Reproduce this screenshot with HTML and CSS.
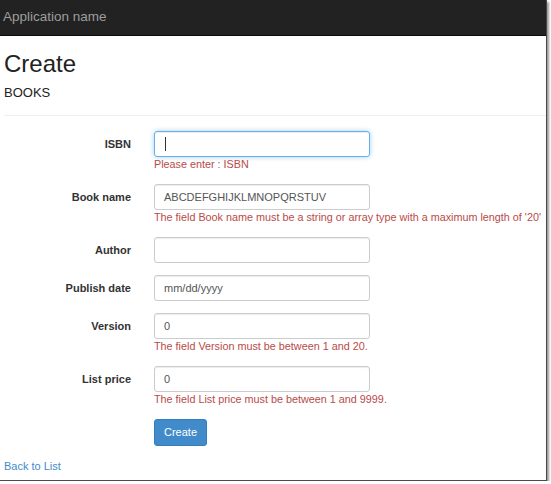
FILE: index.html
```html
<!DOCTYPE html>
<html>
<head>
<meta charset="utf-8">
<link rel="stylesheet" href="styles.css">
</head>
<body>
<div class="frame">
  <div class="navbar"><span class="brand">Application name</span></div>
  <div class="content">
    <h2 class="title">Create</h2>
    <h4 class="subtitle">BOOKS</h4>
    <hr class="rule">
    <form class="form">
      <div class="group">
        <label class="label">ISBN</label>
        <div class="field">
          <div class="input focus"><span class="caret"></span></div>
          <div class="error">Please enter : ISBN</div>
        </div>
      </div>
      <div class="group">
        <label class="label">Book name</label>
        <div class="field">
          <div class="input">ABCDEFGHIJKLMNOPQRSTUV</div>
          <div class="error">The field Book name must be a string or array type with a maximum length of '20'</div>
        </div>
      </div>
      <div class="group">
        <label class="label">Author</label>
        <div class="field"><div class="input"></div></div>
      </div>
      <div class="group">
        <label class="label">Publish date</label>
        <div class="field"><div class="input">mm/dd/yyyy</div></div>
      </div>
      <div class="group">
        <label class="label">Version</label>
        <div class="field">
          <div class="input">0</div>
          <div class="error">The field Version must be between 1 and 20.</div>
        </div>
      </div>
      <div class="group">
        <label class="label">List price</label>
        <div class="field">
          <div class="input">0</div>
          <div class="error">The field List price must be between 1 and 9999.</div>
        </div>
      </div>
      <div class="group">
        <span class="label"></span>
        <div class="field"><span class="btn">Create</span></div>
      </div>
    </form>
    <div class="back"><a class="link" href="#">Back to List</a></div>
  </div>
</div>
</body>
</html>
```
FILE: styles.css
```css
html, body {
  margin: 0;
  padding: 0;
  background: #ffffff;
}
body {
  font-family: "Liberation Sans", Arial, sans-serif;
  font-size: 11px;
  line-height: 16px;
  color: #333333;
}
.frame {
  width: 546px;
  height: 480px;
  overflow: hidden;
  border-right: 1px solid #4a4a4a;
  border-bottom: 1px solid #4a4a4a;
  box-shadow: 2px 2px 2px #9a9a9a;
  background: #ffffff;
}
.navbar {
  height: 36px;
  background: #222222;
  border-bottom: 1px solid #0a0a0a;
  box-sizing: border-box;
  display: flex;
  align-items: center;
  padding-left: 3px;
}
.brand {
  color: #9d9d9d;
  font-size: 13.5px;
  line-height: 16px;
  padding-bottom: 2px;
}
.content {
  padding: 0 0 0 4px;
}
.title {
  margin: 15px 0 0 0;
  font-size: 24px;
  line-height: 26px;
  font-weight: normal;
  color: #222222;
}
.subtitle {
  margin: 8px 0 0 0;
  font-size: 13px;
  line-height: 16px;
  font-weight: normal;
  color: #222222;
}
.rule {
  margin: 14px 0 0 0;
  border: 0;
  border-top: 1px solid #eeeeee;
  height: 0;
}
.form {
  margin-top: 15px;
}
.group {
  display: grid;
  grid-template-columns: 127px 216px;
  column-gap: 23px;
  margin-bottom: 12px;
  align-items: start;
}
.label {
  text-align: right;
  font-weight: bold;
  font-size: 11px;
  line-height: 26px;
  color: #333333;
}
.field {
  min-width: 0;
}
.input {
  box-sizing: border-box;
  width: 216px;
  height: 26px;
  border: 1px solid #cccccc;
  border-radius: 3px;
  padding: 0 9px;
  line-height: 24px;
  font-size: 11px;
  color: #555555;
  box-shadow: inset 0 1px 1px rgba(0,0,0,0.075);
  display: flex;
  align-items: center;
}
.input.focus {
  border-color: #66afe9;
  box-shadow: inset 0 1px 1px rgba(0,0,0,0.075), 0 0 5px rgba(102,175,233,0.6);
}
.caret {
  display: inline-block;
  width: 1px;
  height: 14px;
  background: #333333;
  margin-left: 1px;
}
.error {
  color: #b94a48;
  font-size: 10.8px;
  line-height: 15px;
  white-space: nowrap;
}
.btn {
  display: inline-block;
  box-sizing: border-box;
  width: 53px;
  height: 27px;
  line-height: 25px;
  text-align: center;
  color: #ffffff;
  background: #428bca;
  border: 1px solid #357ebd;
  border-radius: 3px;
  font-size: 11px;
  vertical-align: top;
}
.back {
  margin-top: 0;
}
.link {
  color: #428bca;
  text-decoration: none;
}
```
